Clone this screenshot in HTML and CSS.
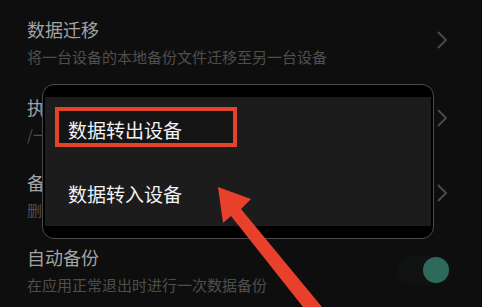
FILE: index.html
```html
<!DOCTYPE html>
<html lang="zh-CN">
<head>
    <meta charset="UTF-8">
    <meta name="viewport" content="width=device-width, initial-scale=1.0">
    <title>数据迁移</title>
    <link rel="stylesheet" href="styles.css">
</head>
<body>
    <div class="list">
        <div class="row first">
            <div class="row-text">
                <div class="row-title">数据迁移</div>
                <div class="row-sub">将一台设备的本地备份文件迁移至另一台设备</div>
            </div>
            <svg class="chevron" width="12" height="20" viewBox="0 0 12 20"><polyline points="2,2 10,10 2,18" fill="none" stroke="#4c4c4c" stroke-width="1.8"/></svg>
        </div>
        <div class="row">
            <div class="row-text">
                <div class="row-title">执行备份</div>
                <div class="row-sub">/一键备份当前数据</div>
            </div>
            <svg class="chevron" width="12" height="20" viewBox="0 0 12 20"><polyline points="2,2 10,10 2,18" fill="none" stroke="#4c4c4c" stroke-width="1.8"/></svg>
        </div>
        <div class="row">
            <div class="row-text">
                <div class="row-title">备份管理</div>
                <div class="row-sub">删除或恢复已有备份</div>
            </div>
            <svg class="chevron" width="12" height="20" viewBox="0 0 12 20"><polyline points="2,2 10,10 2,18" fill="none" stroke="#4c4c4c" stroke-width="1.8"/></svg>
        </div>
        <div class="row">
            <div class="row-text">
                <div class="row-title">自动备份</div>
                <div class="row-sub">在应用正常退出时进行一次数据备份</div>
            </div>
            <span class="toggle"><span class="knob"></span></span>
        </div>
    </div>

    <!-- popup menu -->
    <div class="menu">
        <div class="menu-body">
            <div class="menu-item marked">数据转出设备</div>
            <div class="menu-item">数据转入设备</div>
        </div>
    </div>

    <svg class="arrow" width="482" height="307" viewBox="0 0 482 307">
        <polygon points="218,187 251,199 241,209 322,307 303,307 231,216 223,223" fill="#e8402a"/>
    </svg>
</body>
</html>
```

FILE: styles.css
```css
body {
    margin: 0;
    width: 482px;
    height: 307px;
    overflow: hidden;
    background: #0e0e0e;
    font-family: "Noto Sans CJK SC", "Noto Sans", sans-serif;
    position: relative;
}
.list {
    padding: 0 34px 0 27px;
}
.row {
    display: flex;
    align-items: center;
    justify-content: space-between;
    height: 75px;
}
.row.first {
    height: 80px;
    margin-top: 2px;
}
.row-text {
    display: flex;
    flex-direction: column;
    gap: 6px;
}
.row-title {
    font-size: 18px;
    line-height: 24px;
    color: #a3a3a3;
}
.row-sub {
    font-size: 15px;
    line-height: 20px;
    color: #4e4e4e;
}
.chevron {
    margin-top: -4px;
}
.toggle {
    width: 54px;
    height: 30px;
    border-radius: 15px;
    background: rgba(40, 80, 70, 0.06);
    display: flex;
    align-items: center;
    justify-content: flex-end;
    margin-right: -3px;
}
.knob {
    width: 26px;
    height: 26px;
    border-radius: 50%;
    background: #2e6a5b;
    margin-right: 2px;
}

.menu {
    position: absolute;
    left: 42px;
    top: 84px;
    width: 392px;
    height: 155px;
    box-sizing: border-box;
    border: 1px solid #4a4a4a;
    border-radius: 12px;
    background: #000;
    padding: 12px 2px;
}
.menu-body {
    height: 100%;
    background: #1c1c1c;
    display: flex;
    flex-direction: column;
    gap: 36px;
    padding: 10px 10px 0;
    box-sizing: border-box;
}
.menu-item {
    font-size: 19px;
    line-height: 22px;
    color: #f2f2f2;
    padding-left: 13px;
}
.menu-item.marked {
    width: 182px;
    box-sizing: border-box;
    border: 4px solid #e2432b;
    padding: 8px 9px 2px;
    background: #141414;
}
.arrow {
    position: absolute;
    left: 0;
    top: 0;
}
```
